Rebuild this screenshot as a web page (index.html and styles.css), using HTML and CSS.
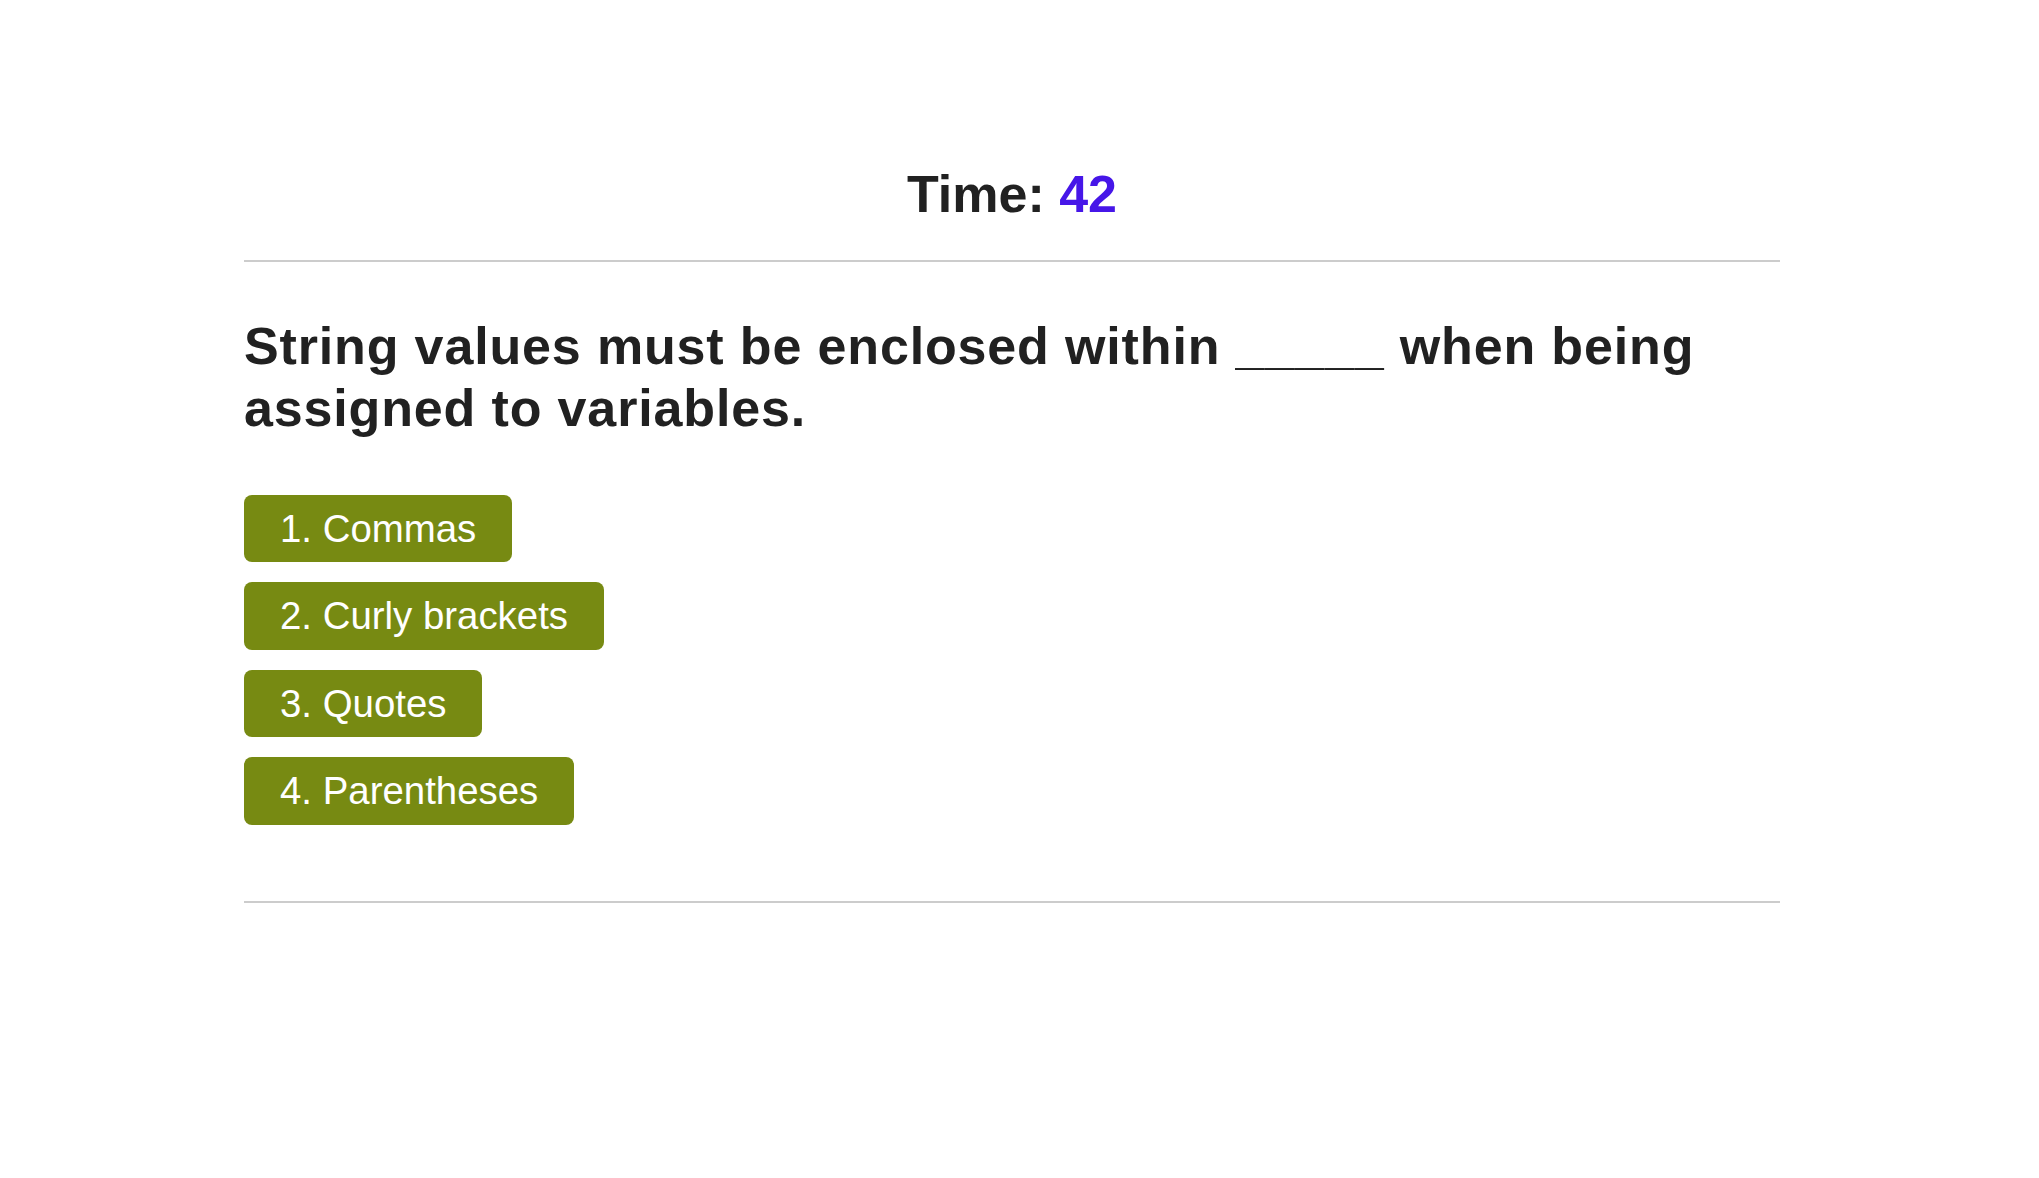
FILE: index.html
```html
<!DOCTYPE html>
<html lang="en">
<head>
<meta charset="utf-8">
<title>Code Quiz</title>
<link rel="stylesheet" href="styles.css">
</head>
<body>
<main class="container">
  <header class="timer">Time: <span class="timer-value">42</span></header>
  <hr class="divider">
  <section class="quiz">
    <h2 class="question">String values must be enclosed within _____ when being assigned to variables.</h2>
    <div class="options">
      <button class="option">1. Commas</button>
      <button class="option">2. Curly brackets</button>
      <button class="option">3. Quotes</button>
      <button class="option">4. Parentheses</button>
    </div>
  </section>
  <hr class="divider">
</main>
</body>
</html>
```

FILE: styles.css
```css
html, body {
  margin: 0;
  background: #ffffff;
}

body {
  padding-right: 15px;
  font-family: "Liberation Sans", Arial, sans-serif;
  color: #212121;
}

.container {
  max-width: 1536px;
  margin: 0 auto;
}

.timer {
  margin: 164px 0 36px;
  font-size: 52px;
  font-weight: 700;
  line-height: 60px;
  text-align: center;
  color: #212121;
}

.timer-value {
  color: #4616e8;
}

.divider {
  margin: 0;
  border: 0;
  border-top: 2px solid #cccccc;
}

.quiz {
  padding: 53px 0 76px;
}

.question {
  margin: 0 0 55px;
  font-size: 52px;
  font-weight: 700;
  line-height: 62.4px;
  letter-spacing: 0.85px;
  color: #212121;
}

.options {
  display: flex;
  flex-direction: column;
  align-items: flex-start;
  gap: 20px;
}

.option {
  font-family: "Liberation Sans", Arial, sans-serif;
  font-size: 38.4px;
  line-height: 43.5px;
  padding: 12px 36px;
  border: 0;
  border-radius: 8px;
  background: #778a12;
  color: #ffffff;
  cursor: pointer;
}
```
